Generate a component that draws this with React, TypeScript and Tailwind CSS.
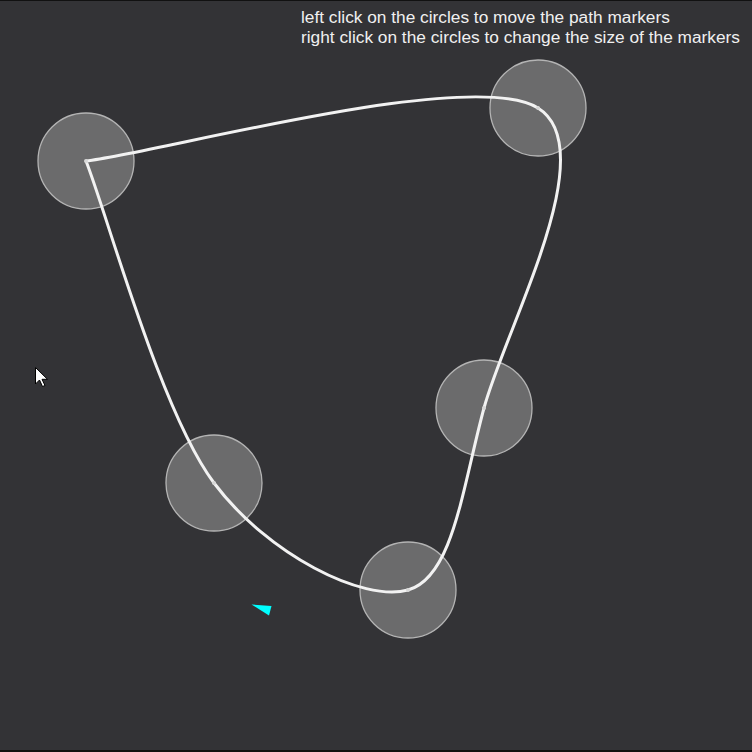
import React from "react";

type Pt = [number, number];

const markers: Pt[] = [
	[86, 161],
	[538, 108],
	[484, 408],
	[408, 590],
	[214, 483],
];

// catmull-rom through the markers, closed back to the first one (open ends)
const buildPath = (pts: Pt[]) => {
	const p = [...pts, pts[0]];
	let d = `M${p[0][0]},${p[0][1]}`;
	for (let i = 0; i < p.length - 1; i++) {
		const p0 = p[i - 1] ?? p[i];
		const p1 = p[i];
		const p2 = p[i + 1];
		const p3 = p[i + 2] ?? p[i + 1];
		const c1x = p1[0] + (p2[0] - p0[0]) / 6;
		const c1y = p1[1] + (p2[1] - p0[1]) / 6;
		const c2x = p2[0] - (p3[0] - p1[0]) / 6;
		const c2y = p2[1] - (p3[1] - p1[1]) / 6;
		d += ` C${c1x.toFixed(1)},${c1y.toFixed(1)} ${c2x.toFixed(1)},${c2y.toFixed(1)} ${p2[0]},${p2[1]}`;
	}
	return d;
};

const App = () => {
	return (
		<div className="relative h-[752px] w-[752px] overflow-hidden bg-[#333336] border-t border-b-2 border-[#111]">
			<div className="absolute left-[301px] top-[6px] text-[17.3px] leading-[20px] text-[#f0f0f0] font-['Liberation_Sans',Arial,sans-serif] whitespace-nowrap">
				<div>left click on the circles to move the path markers</div>
				<div>right click on the circles to change the size of the markers</div>
			</div>

			<svg className="absolute left-0 top-[-1px]" width={752} height={752}>
				{markers.map(([x, y]) => (
					<circle
						key={`${x}-${y}`}
						cx={x}
						cy={y}
						r={48}
						fill="#6b6b6c"
						stroke="#b4b4b4"
						strokeWidth={1.3}
					/>
				))}
				<path
					d={buildPath(markers)}
					fill="none"
					stroke="#f2f2f2"
					strokeWidth={3}
					strokeLinejoin="miter"
				/>
				{markers.map(([x, y]) => (
					<circle key={`dot-${x}-${y}`} cx={x} cy={y} r={2} fill="#d8d8d8" />
				))}
				{/* cyan pointer */}
				<polygon points="251.5,604.5 271.5,606 269,615.5" fill="#00ffff" />
				{/* mouse cursor */}
				<path
					d="M35.5,367.5 L35.5,384 L39.5,380 L42.5,386.5 L45,385.5 L42,379.3 L47.5,379.3 Z"
					fill="#fff"
					stroke="#000"
					strokeWidth={1}
					strokeLinejoin="round"
				/>
			</svg>
		</div>
	);
};

export default App;
